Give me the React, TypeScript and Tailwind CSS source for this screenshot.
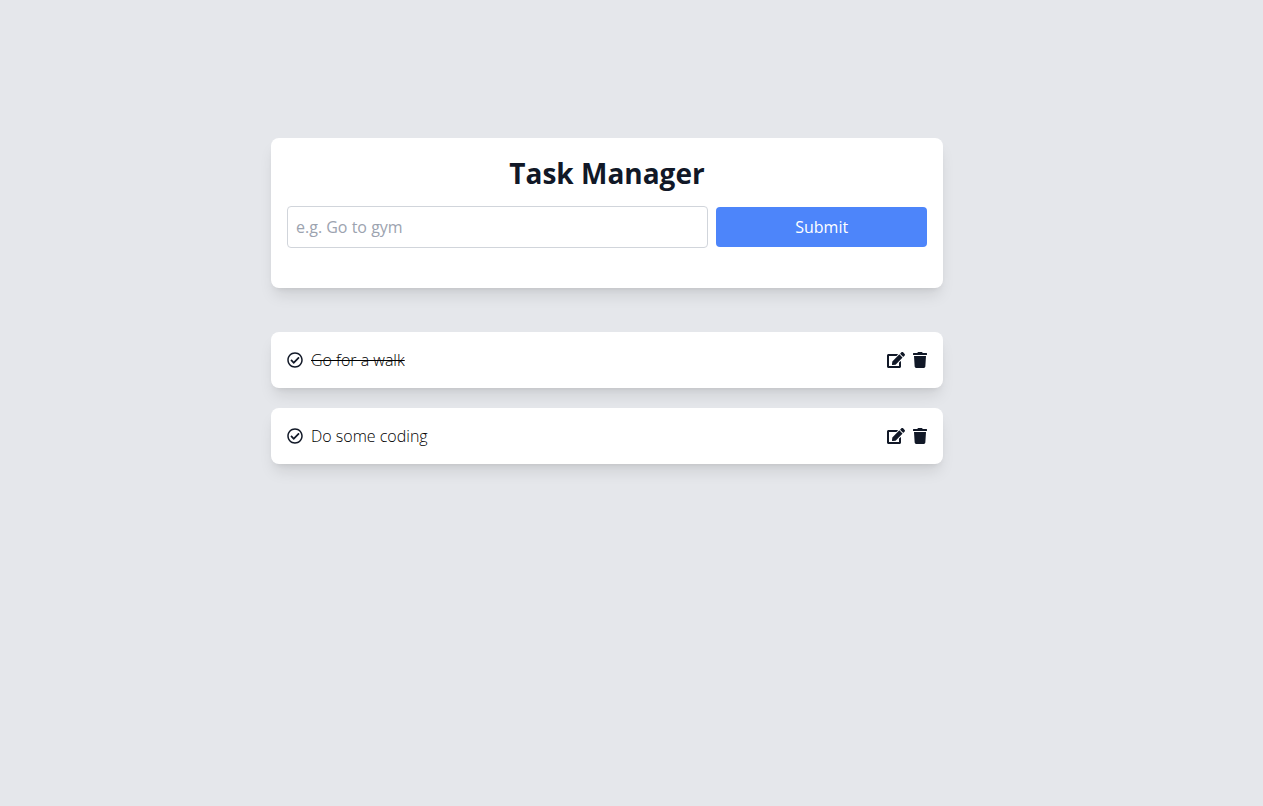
import { useState } from "react";
import { FaRegCheckCircle, FaEdit, FaTrash } from "react-icons/fa";

type Task = { id: number; title: string; done: boolean };

const initialTasks: Task[] = [
  { id: 1, title: "Go for a walk", done: true },
  { id: 2, title: "Do some coding", done: false },
];

export default function App() {
  const [tasks, setTasks] = useState<Task[]>(initialTasks);
  const [title, setTitle] = useState("");

  const addTask = (event: React.FormEvent) => {
    event.preventDefault();
    if (!title.trim()) return;
    setTasks([...tasks, { id: Date.now(), title, done: false }]);
    setTitle("");
  };

  const toggle = (id: number) =>
    setTasks(tasks.map((t) => (t.id === id ? { ...t, done: !t.done } : t)));

  const edit = (task: Task) => {
    setTitle(task.title);
    setTasks(tasks.filter((t) => t.id !== task.id));
  };

  return (
    <main className="min-h-screen bg-[#e5e7eb] pt-[138px] pr-[49px] font-['Open_Sans','Noto_Sans',sans-serif] text-[#111827]">
      <div className="mx-auto w-full max-w-2xl">
        <form onSubmit={addTask} className="rounded-lg bg-white px-4 pt-[17px] pb-10 shadow-lg">
          <h1 className="mb-[15px] text-center text-[28px] leading-9 font-bold">Task Manager</h1>
          <div className="grid grid-cols-[2fr_1fr] items-center gap-2">
            <input
              type="text"
              aria-label="New task"
              placeholder="e.g. Go to gym"
              value={title}
              onChange={(e) => setTitle(e.target.value)}
              className="w-full rounded-sm border border-[#d1d5db] p-2 placeholder:text-[#9ca3af]"
            />
            <button type="submit" className="rounded-sm bg-[#4d85fa] p-2 text-white">
              Submit
            </button>
          </div>
        </form>

        <ul className="mt-11 flex flex-col gap-5">
          {tasks.map((task) => (
            <li key={task.id} className="flex items-center justify-between rounded-lg bg-white p-4 shadow-lg">
              <div className="flex items-center gap-2">
                <button type="button" aria-label="Toggle task" onClick={() => toggle(task.id)}>
                  <FaRegCheckCircle />
                </button>
                <span className={task.done ? "font-light text-black line-through" : "font-light text-black"}>
                  {task.title}
                </span>
              </div>
              <div className="flex items-center gap-2">
                <button type="button" aria-label="Edit task" onClick={() => edit(task)}>
                  <FaEdit className="h-4 w-[18px]" />
                </button>
                <button
                  type="button"
                  aria-label="Delete task"
                  onClick={() => setTasks(tasks.filter((t) => t.id !== task.id))}
                >
                  <FaTrash className="h-4 w-[14px]" />
                </button>
              </div>
            </li>
          ))}
        </ul>
      </div>
    </main>
  );
}
